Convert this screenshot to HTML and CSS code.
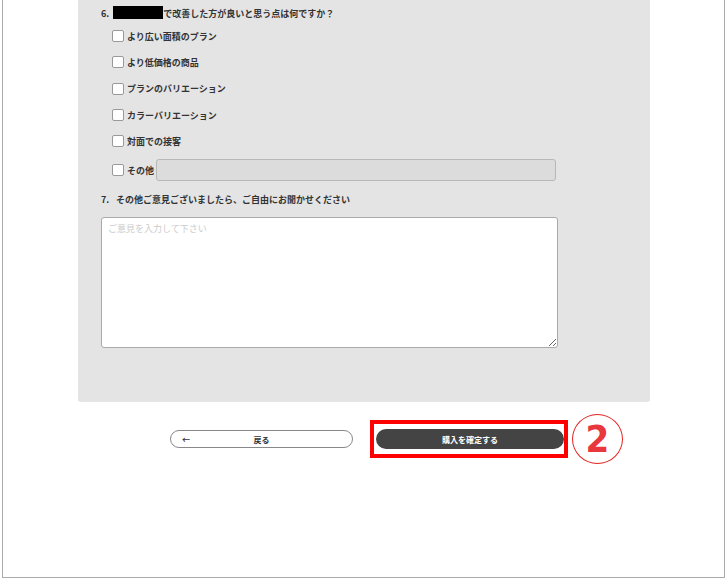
FILE: index.html
```html
<!DOCTYPE html>
<html>

<head>
    <title>アンケート</title>
    <link rel="stylesheet" href="styles.css">
</head>

<body>
    <div class="frame">
        <div class="survey">
            <p class="question">6. <span class="redacted"></span>で改善した方が良いと思う点は何ですか？</p>

            <div class="options">
                <label class="option"><input type="checkbox"> より広い面積のプラン</label>
                <label class="option"><input type="checkbox"> より低価格の商品</label>
                <label class="option"><input type="checkbox"> プランのバリエーション</label>
                <label class="option"><input type="checkbox"> カラーバリエーション</label>
                <label class="option"><input type="checkbox"> 対面での接客</label>
                <label class="option option-other"><input type="checkbox"> その他<input type="text" class="other-text"></label>
            </div>

            <p class="question q7"><span class="num">7.</span>その他ご意見ございましたら、ご自由にお聞かせください</p>
            <textarea class="comment" placeholder="ご意見を入力して下さい"></textarea>
        </div>

        <div class="actions">
            <button class="btn-back"><span class="arrow">←</span><span>戻る</span></button>
            <div class="highlight">
                <button class="btn-confirm">購入を確定する</button>
            </div>
            <div class="step-mark">2</div>
        </div>
    </div>
</body>

</html>
```

FILE: styles.css
```css
body {
    margin: 0;
    font-family: "Noto Sans CJK JP", "Noto Sans", sans-serif;
    background-color: white;
    color: #333;
}

.frame {
    box-sizing: border-box;
    margin-left: 2px;
    width: 723px;
    height: 578px;
    border: 1px solid #aaa;
    border-top: none;
    overflow: hidden;
}

.survey {
    box-sizing: border-box;
    margin-left: 75px;
    width: 572px;
    padding: 6px 0 54px 23px;
    background-color: #e4e4e4;
    border-radius: 0 0 3px 3px;
}

.question {
    margin: 0;
    height: 16px;
    line-height: 16px;
    font-size: 9px;
    font-weight: bold;
    color: #333;
}

.question .num {
    display: inline-block;
    width: 15px;
}

.redacted {
    display: inline-block;
    width: 50px;
    height: 13px;
    margin-left: 2px;
    background-color: #000;
    vertical-align: -2px;
}

.options {
    padding-top: 1px;
    padding-left: 11px;
}

.option {
    display: flex;
    align-items: center;
    height: 26.3px;
    font-size: 9px;
    font-weight: bold;
    color: #333;
}

.option input[type="checkbox"] {
    appearance: none;
    box-sizing: border-box;
    width: 12px;
    height: 12px;
    margin: 0 3px 0 0;
    background-color: white;
    border: 1px solid #999;
    border-radius: 2px;
}

.option-other {
    height: 22px;
    margin-top: 5px;
}

.other-text {
    box-sizing: border-box;
    width: 400px;
    height: 22px;
    margin-left: 2px;
    background-color: #dcdcdc;
    border: 1px solid #b8b8b8;
    border-radius: 3px;
}

.q7 {
    margin-top: 11px;
}

.comment {
    display: block;
    box-sizing: border-box;
    width: 457px;
    height: 131px;
    margin-top: 9px;
    padding: 4px 6px;
    font-family: inherit;
    font-size: 9px;
    border: 1px solid #aaa;
    border-radius: 3px;
    background-color: white;
}

.comment::placeholder {
    color: #ccc;
}

.actions {
    display: flex;
    align-items: center;
    margin-top: 12px;
    padding-left: 167px;
}

.btn-back {
    box-sizing: border-box;
    display: grid;
    grid-template-columns: 30px 1fr 30px;
    align-items: center;
    width: 183px;
    height: 18px;
    padding: 0;
    background-color: white;
    border: 1px solid #888;
    border-radius: 9px;
    font-family: inherit;
    font-size: 8px;
    font-weight: bold;
    color: #333;
}

.btn-back .arrow {
    text-align: left;
    padding-left: 11px;
}

.highlight {
    margin-left: 17px;
    padding: 5px 0 5px 2px;
    border: 4px solid #ff0000;
}

.btn-confirm {
    display: block;
    width: 188px;
    height: 20px;
    padding: 0;
    background-color: #444;
    border: none;
    border-radius: 10px;
    font-family: inherit;
    font-size: 8px;
    font-weight: bold;
    color: white;
}

.step-mark {
    box-sizing: border-box;
    display: flex;
    align-items: center;
    justify-content: center;
    width: 51px;
    height: 50px;
    margin-left: 4px;
    border: 1.5px solid #e52222;
    border-radius: 50%;
    font-family: "DejaVu Sans Condensed", "DejaVu Sans", sans-serif;
    font-size: 38px;
    font-weight: bold;
    color: #e8383d;
}
```
